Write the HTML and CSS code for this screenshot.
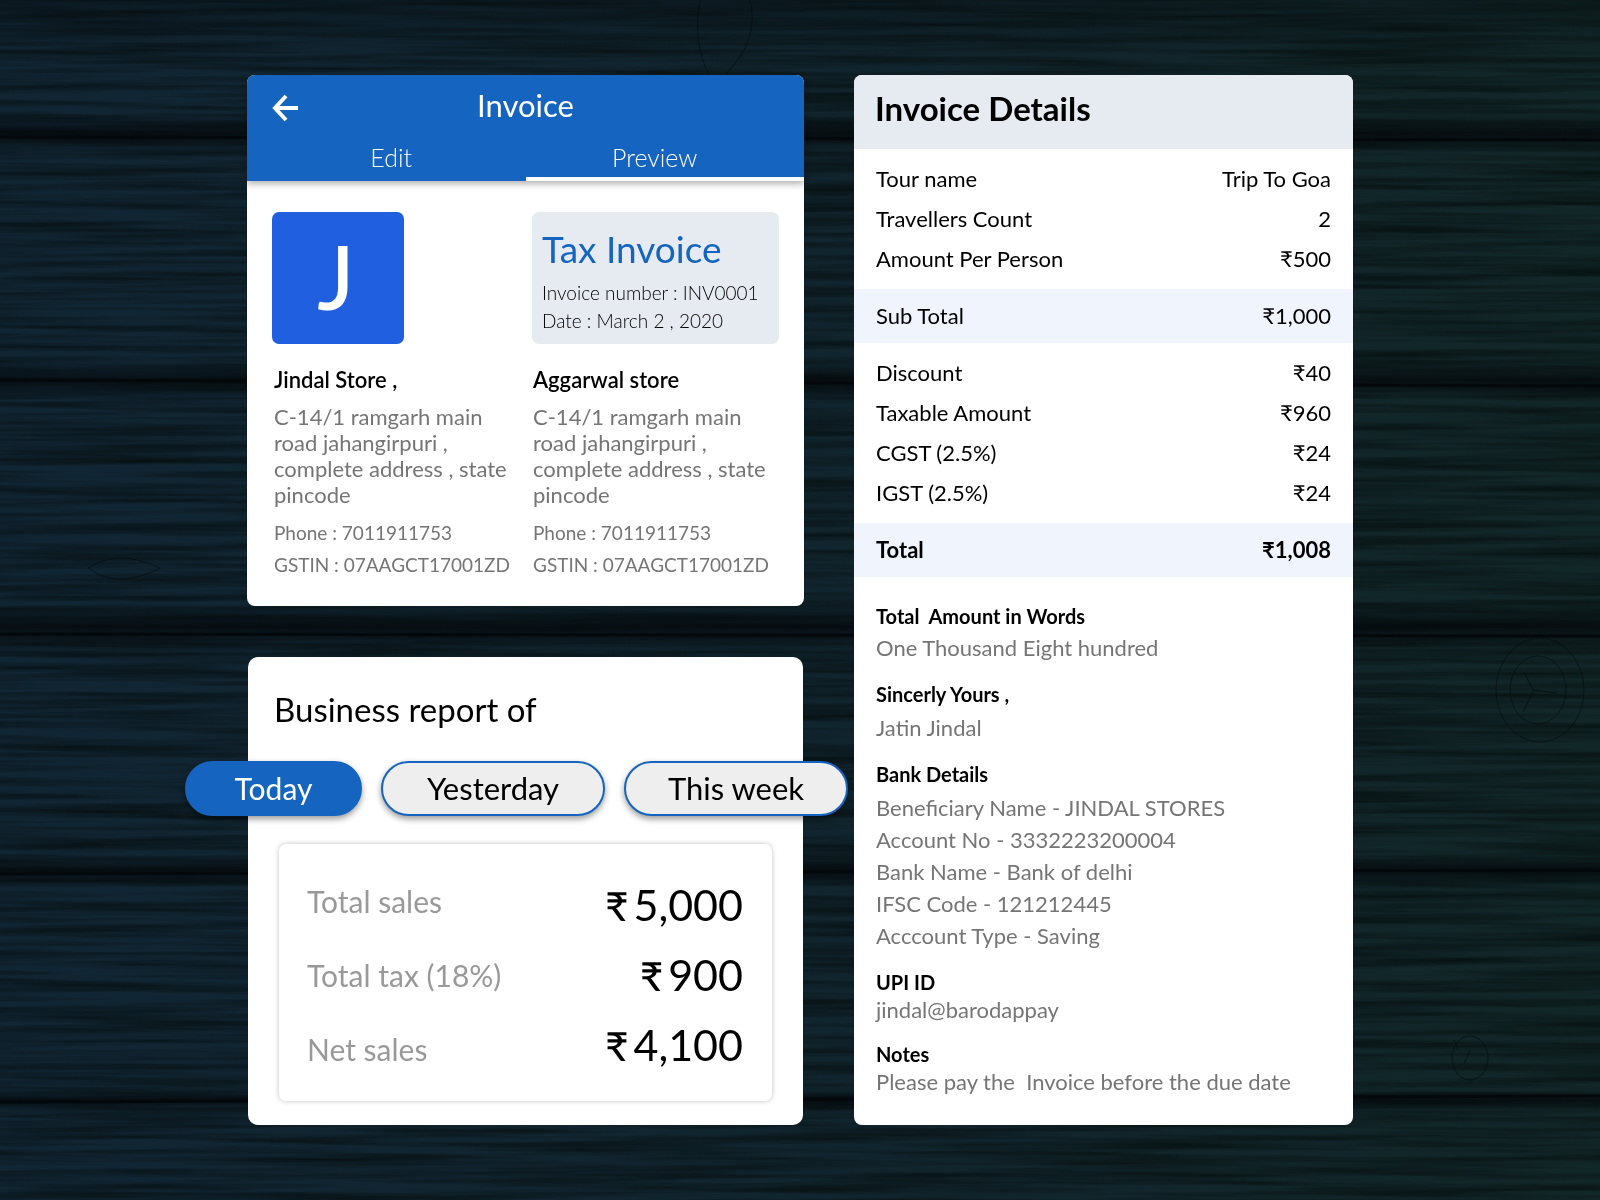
FILE: index.html
```html
<!DOCTYPE html>
<html lang="en">
<head>
<meta charset="utf-8">
<meta name="viewport" content="width=device-width, initial-scale=1">
<title>Invoice</title>
<link rel="stylesheet" href="styles.css">
</head>
<body>
<svg class="wood" aria-hidden="true" preserveAspectRatio="none" viewBox="0 0 1600 1200">
  <defs>
    <filter id="grain" x="0" y="0" width="100%" height="100%" color-interpolation-filters="sRGB">
      <feTurbulence type="fractalNoise" baseFrequency="0.004 0.14" numOctaves="4" seed="7"/>
      <feColorMatrix values="0 0 0 0 0.02  0 0 0 0 0.05  0 0 0 0 0.05  1.5 0 0 0 -0.5"/>
    </filter>
    <linearGradient id="tone" x1="0" y1="0" x2="1" y2="0">
      <stop offset="0" stop-color="#112635"/>
      <stop offset="0.55" stop-color="#11252e"/>
      <stop offset="1" stop-color="#122728"/>
    </linearGradient>
    <linearGradient id="seam" x1="0" y1="0" x2="0" y2="1">
      <stop offset="0" stop-color="#04090c" stop-opacity="0"/>
      <stop offset="0.5" stop-color="#04090c" stop-opacity="0.8"/>
      <stop offset="1" stop-color="#04090c" stop-opacity="0"/>
    </linearGradient>
  </defs>
  <rect width="1600" height="1200" fill="url(#tone)"/>
  <rect width="1600" height="1200" filter="url(#grain)"/>
  <rect y="-50" width="1600" height="110" fill="url(#seam)" opacity="0.4"/>
  <rect y="113" width="1600" height="40" fill="url(#seam)"/>
  <rect y="360" width="1600" height="40" fill="url(#seam)"/>
  <rect y="603" width="1600" height="48" fill="url(#seam)"/>
  <rect y="854" width="1600" height="34" fill="url(#seam)"/>
  <rect y="1090" width="1600" height="20" fill="url(#seam)"/>
  <g fill="none" stroke="#04080a" stroke-width="3">
    <path d="M0 137L1600 140M0 380L1600 386M0 634L1600 636M0 874L1600 870M0 1102L1600 1096"/>
  </g>
  <g fill="none" stroke="#060d10" stroke-opacity="0.7">
    <path d="M700 0q-8 40 8 74M750 0q10 40-24 74"/>
    <ellipse cx="1540" cy="690" rx="44" ry="52"/>
    <ellipse cx="1538" cy="690" rx="28" ry="34"/>
    <path d="M1524 672l9 18 24 3M1533 692l-10 20"/>
    <ellipse cx="1470" cy="1058" rx="18" ry="22"/>
    <path d="M1454 1040l4 10M1464 1064l6-14"/>
    <path d="M88 568q30-20 72 0q-42 22-72 0z"/>
  </g>
</svg>

<main class="board">
  <div class="column">
    <section class="card invoice">
      <header class="appbar">
        <div class="appbar-top">
          <button class="back" type="button" aria-label="Back">
            <svg width="26" height="28" viewBox="0 0 26 28" fill="none" stroke="#fff" stroke-width="4">
              <path d="M14 2L3 14L14 26M3 14H26"/>
            </svg>
          </button>
          <h1 class="appbar-title">Invoice</h1>
        </div>
        <nav class="tabs">
          <a class="tab tab-edit" href="#edit">Edit</a>
          <a class="tab tab-preview" href="#preview" aria-current="page">Preview</a>
        </nav>
      </header>
      <div class="invoice-body">
        <div class="logo">J</div>
        <div class="tax">
          <h2 class="tax-title">Tax Invoice</h2>
          <p class="tax-line">Invoice number : INV0001</p>
          <p class="tax-line">Date : March 2 , 2020</p>
        </div>
        <address class="party">
          <h3 class="party-name">Jindal Store ,</h3>
          <p class="party-address">C-14/1 ramgarh main road jahangirpuri , complete address , state pincode</p>
          <p class="party-line">Phone : 7011911753</p>
          <p class="party-line">GSTIN : 07AAGCT17001ZD</p>
        </address>
        <address class="party party-buyer">
          <h3 class="party-name">Aggarwal store</h3>
          <p class="party-address">C-14/1 ramgarh main road jahangirpuri , complete address , state pincode</p>
          <p class="party-line">Phone : 7011911753</p>
          <p class="party-line">GSTIN : 07AAGCT17001ZD</p>
        </address>
      </div>
    </section>

    <section class="card report">
      <h2 class="report-title">Business report of</h2>
      <div class="pills">
        <button class="pill pill-active" type="button">Today</button>
        <button class="pill" type="button">Yesterday</button>
        <button class="pill" type="button">This week</button>
      </div>
      <div class="summary">
        <ul class="summary-labels">
          <li>Total sales</li>
          <li>Total tax (18%)</li>
          <li>Net sales</li>
        </ul>
        <ul class="summary-values">
          <li><span class="rupee">₹</span>5,000</li>
          <li><span class="rupee">₹</span>900</li>
          <li><span class="rupee">₹</span>4,100</li>
        </ul>
      </div>
    </section>
  </div>

  <section class="card details">
    <h2 class="details-title">Invoice Details</h2>
    <table class="lines">
      <tbody class="group">
        <tr><th scope="row">Tour name</th><td>Trip To Goa</td></tr>
        <tr><th scope="row">Travellers Count</th><td>2</td></tr>
        <tr><th scope="row">Amount Per Person</th><td>₹500</td></tr>
      </tbody>
      <tbody class="band">
        <tr><th scope="row">Sub Total</th><td>₹1,000</td></tr>
      </tbody>
      <tbody class="group">
        <tr><th scope="row">Discount</th><td>₹40</td></tr>
        <tr><th scope="row">Taxable Amount</th><td>₹960</td></tr>
        <tr><th scope="row">CGST (2.5%)</th><td>₹24</td></tr>
        <tr><th scope="row">IGST (2.5%)</th><td>₹24</td></tr>
      </tbody>
      <tbody class="band band-total">
        <tr><th scope="row">Total</th><td>₹1,008</td></tr>
      </tbody>
    </table>
    <div class="notes">
      <div class="note">
        <h3>Total&nbsp; Amount in Words</h3>
        <p>One Thousand Eight hundred</p>
      </div>
      <div class="note note-open">
        <h3>Sincerly Yours ,</h3>
        <p>Jatin Jindal</p>
      </div>
      <div class="note note-open">
        <h3>Bank Details</h3>
        <p>Beneficiary Name - JINDAL STORES</p>
        <p>Account No - 3332223200004</p>
        <p>Bank Name - Bank of delhi</p>
        <p>IFSC Code - 121212445</p>
        <p>Acccount Type - Saving</p>
      </div>
      <div class="note note-tight">
        <h3>UPI ID</h3>
        <p>jindal@barodappay</p>
      </div>
      <div class="note note-tight">
        <h3>Notes</h3>
        <p>Please pay the&nbsp; Invoice before the due date</p>
      </div>
    </div>
  </section>
</main>
</body>
</html>
```
FILE: styles.css
```css
* { box-sizing: border-box; }

body {
  margin: 0;
  min-height: 100vh;
  background: #10222c;
  color: #000;
  font-family: Lato, "Noto Sans", sans-serif;
  font-size: 22px;
}

h1, h2, h3, p, ul { margin: 0; padding: 0; }
ul { list-style: none; }
address { font-style: normal; }
button { font-family: inherit; }

.wood {
  position: fixed;
  inset: 0;
  width: 100%;
  height: 100%;
  z-index: -1;
}

.board {
  display: grid;
  grid-template-columns: minmax(0, 557fr) minmax(0, 499fr);
  gap: 50px;
  max-width: 1106px;
  margin: 0 auto;
  padding: 75px 0;
}

.column {
  display: flex;
  flex-direction: column;
  gap: 51px;
}

.card {
  background: #fff;
  border-radius: 8px;
}

/* Invoice preview */
.appbar {
  background: #1565c0;
  color: #fff;
  border-radius: 8px 8px 0 0;
  box-shadow: 0 3px 6px rgba(0, 0, 0, 0.3);
}

.appbar-top {
  display: grid;
  grid-template-columns: 26px 1fr 26px;
  align-items: center;
  height: 60px;
  padding: 0 25px;
}

.back {
  display: flex;
  margin-top: 6px;
  padding: 0;
  border: 0;
  background: none;
}

.appbar-title {
  font-size: 31px;
  font-weight: 400;
  line-height: 60px;
  text-align: center;
}

.tabs {
  display: grid;
  grid-template-columns: 1fr 1fr;
}

.tab {
  padding-bottom: 2px;
  color: #fff;
  font-size: 25px;
  font-weight: 300;
  line-height: 44px;
  text-align: center;
  text-decoration: none;
}

.tab-edit { padding-left: 10px; }

.tab-preview {
  padding-right: 20px;
  box-shadow: inset 0 -4px #fff;
}

.invoice-body {
  display: grid;
  grid-template-columns: 1fr 247px;
  row-gap: 22px;
  padding: 31px 25px 25px;
}

.logo {
  width: 132px;
  height: 132px;
  padding-right: 4px;
  border-radius: 7px;
  background: #1f5fe0;
  color: #fff;
  font-size: 88px;
  font-weight: 500;
  line-height: 128px;
  text-align: center;
}

.tax {
  padding: 13px 10px 9px;
  border-radius: 7px;
  background: #e6ebf2;
}

.tax-title {
  margin-bottom: 6px;
  color: #1565c0;
  font-size: 37px;
  font-weight: 400;
  line-height: 48px;
}

.tax-line {
  font-size: 19px;
  font-weight: 300;
  line-height: 28px;
}

.party {
  width: 237px;
  padding-left: 2px;
}

.party-buyer { padding-left: 1px; }

.party-name {
  margin-bottom: 11px;
  font-size: 22px;
  font-weight: 600;
  line-height: 27px;
}

.party-address {
  margin-bottom: 9px;
  color: #757575;
  line-height: 26px;
}

.party-line {
  color: #757575;
  font-size: 19px;
  line-height: 32px;
  white-space: nowrap;
}

/* Business report */
.report {
  flex: 1;
  margin: 0 1px;
  padding: 32px 31px 24px;
  border-radius: 10px;
}

.report-title {
  margin-left: -5px;
  font-size: 33px;
  font-weight: 400;
  line-height: 40px;
}

.pills {
  display: flex;
  gap: 19px;
  margin: 32px -76px 28px -94px;
}

.pill {
  flex: none;
  width: 224px;
  height: 55px;
  padding: 0 0 2px;
  border: 2px solid #1565c0;
  border-radius: 28px;
  background: #eee;
  box-shadow: 0 3px 6px rgba(0, 0, 0, 0.4);
  color: #000;
  font-size: 31px;
}

.pill-active {
  width: 177px;
  background: #1565c0;
  color: #fff;
  font-size: 30px;
}

.summary {
  display: flex;
  align-items: center;
  justify-content: space-between;
  padding: 20px 29px 15px 28px;
  border-radius: 7px;
  box-shadow: 0 0 5px rgba(0, 0, 0, 0.25);
}

.summary-labels {
  color: #999;
  font-size: 30px;
  line-height: 74px;
}

.summary-values {
  font-size: 43px;
  line-height: 70px;
  text-align: right;
}

.rupee {
  margin-right: 5px;
  font-size: 40px;
  font-weight: 500;
  line-height: 1;
}

/* Invoice details */
.details-title {
  padding: 1px 21px 9px;
  border-radius: 8px 8px 0 0;
  background: #e6ebf2;
  font-size: 33px;
  font-weight: 700;
  line-height: 64px;
}

.lines {
  width: 100%;
  border-collapse: collapse;
  line-height: 40px;
}

.lines th, .lines td { padding: 0 22px; }

.lines th {
  font-weight: 400;
  text-align: left;
}

.lines td { text-align: right; }

.group tr:first-child > * { padding-top: 10px; }
.group tr:last-child > * { padding-bottom: 10px; }

.band {
  background: #f0f5fd;
  line-height: 54px;
}

.band-total th, .band-total td { font-weight: 700; }

.notes {
  display: flex;
  flex-direction: column;
  gap: 16px;
  padding: 25px 22px 29px;
}

.note h3 {
  margin-bottom: 2px;
  font-size: 20px;
  font-weight: 700;
  line-height: 28px;
}

.note p {
  color: #757575;
  line-height: 32px;
}

.note-open h3 { margin-bottom: 4px; }
.note-tight h3 { margin-bottom: 0; }
.note-tight p { line-height: 28px; }
```
